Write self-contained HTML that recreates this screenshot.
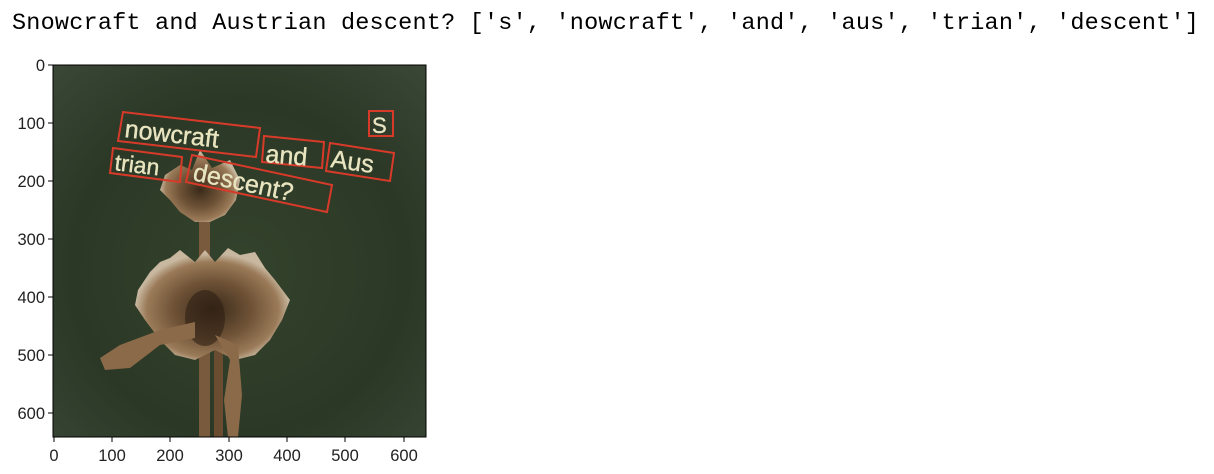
<!DOCTYPE html>
<html><head><meta charset="utf-8"><style>
html,body{margin:0;padding:0;background:#fff;width:1214px;height:474px;overflow:hidden}
.t{position:absolute;left:12px;top:10px;font-family:"Liberation Mono",monospace;font-size:23.5px;color:#000;white-space:pre;letter-spacing:0.2px}
svg{position:absolute;left:0;top:0}
</style></head><body>
<div class="t">Snowcraft and Austrian descent? ['s', 'nowcraft', 'and', 'aus', 'trian', 'descent']</div>
<svg width="1214" height="474" font-family="Liberation Sans, sans-serif">
<defs>
<radialGradient id="bg" cx="0.5" cy="0.55" r="0.75">
<stop offset="0" stop-color="#34432c"/><stop offset="0.6" stop-color="#2b3826"/><stop offset="1" stop-color="#3b4737"/>
</radialGradient>
<radialGradient id="fl" cx="0.5" cy="0.55" r="0.5">
<stop offset="0" stop-color="#3a2a1a"/><stop offset="0.5" stop-color="#6e5236"/><stop offset="0.85" stop-color="#9a7a58"/><stop offset="1" stop-color="#c8b8a0"/>
</radialGradient>
</defs>
<rect x="53" y="65" width="373" height="372" fill="url(#bg)"/>
<rect x="199" y="215" width="11" height="222" fill="#7a5a3c"/>
<rect x="214" y="340" width="9" height="97" fill="#6a4c30"/>
<polygon points="165,175 180,165 192,170 200,150 212,168 230,160 240,180 236,200 225,215 210,222 195,222 180,212 170,200 160,190" fill="url(#fl)"/>
<polygon points="138,290 150,272 160,262 170,258 180,250 195,262 205,250 215,262 228,248 240,255 255,252 265,268 275,280 290,300 282,320 270,340 255,355 235,360 215,350 195,360 175,355 160,340 145,320 135,305" fill="url(#fl)"/>
<ellipse cx="205" cy="318" rx="20" ry="28" fill="#2e2014" opacity="0.6"/>
<path d="M195 322 L160 330 L120 345 L100 358 L105 370 L130 368 L160 345 L195 338Z" fill="#8a6a48"/>
<path d="M215 335 L230 360 L224 400 L228 437 L238 437 L242 395 L238 345Z" fill="#8a6a48"/>
<g fill="none" stroke="#d83a2a" stroke-width="2">
<polygon points="123,112 260,128 256,157 118,141"/>
<polygon points="264,136 324,142 322,168 262,162"/>
<polygon points="330,143 394,153 390,181 326,171"/>
<rect x="369" y="111" width="24" height="25"/>
<polygon points="113,148 182,157 180,182 110,173"/>
<polygon points="192,155 332,185 327,212 186,182"/>
</g>
<g fill="#e8e4c0" font-size="25" stroke="#e8e4c0" stroke-width="0.4">
<text x="124" y="137" transform="rotate(6.5 124 137)">nowcraft</text>
<text x="265" y="162" transform="rotate(5 265 162)">and</text>
<text x="330" y="167" transform="rotate(8 330 167)">Aus</text>
<text x="372" y="133" font-size="22">S</text>
<text x="114" y="170" font-size="23" transform="rotate(7 114 170)">trian</text>
<text x="192" y="180" transform="rotate(12 192 180)">descent?</text>
</g>
<rect x="53" y="65" width="373" height="372" fill="none" stroke="#000" stroke-width="1"/>
<g stroke="#000" stroke-width="1">
<line x1="48" y1="65" x2="53" y2="65"/><line x1="48" y1="123" x2="53" y2="123"/><line x1="48" y1="181" x2="53" y2="181"/><line x1="48" y1="239" x2="53" y2="239"/><line x1="48" y1="297" x2="53" y2="297"/><line x1="48" y1="355" x2="53" y2="355"/><line x1="48" y1="413" x2="53" y2="413"/>
<line x1="54" y1="437" x2="54" y2="442"/><line x1="112" y1="437" x2="112" y2="442"/><line x1="170" y1="437" x2="170" y2="442"/><line x1="229" y1="437" x2="229" y2="442"/><line x1="287" y1="437" x2="287" y2="442"/><line x1="345" y1="437" x2="345" y2="442"/><line x1="404" y1="437" x2="404" y2="442"/>
</g>
<g font-size="16.5" fill="#222" text-anchor="end">
<text x="45" y="71">0</text><text x="45" y="129">100</text><text x="45" y="187">200</text><text x="45" y="245">300</text><text x="45" y="303">400</text><text x="45" y="361">500</text><text x="45" y="419">600</text>
</g>
<g font-size="16.5" fill="#222" text-anchor="middle">
<text x="54" y="461">0</text><text x="112" y="461">100</text><text x="170" y="461">200</text><text x="229" y="461">300</text><text x="287" y="461">400</text><text x="345" y="461">500</text><text x="404" y="461">600</text>
</g>
</svg>
</body></html>
